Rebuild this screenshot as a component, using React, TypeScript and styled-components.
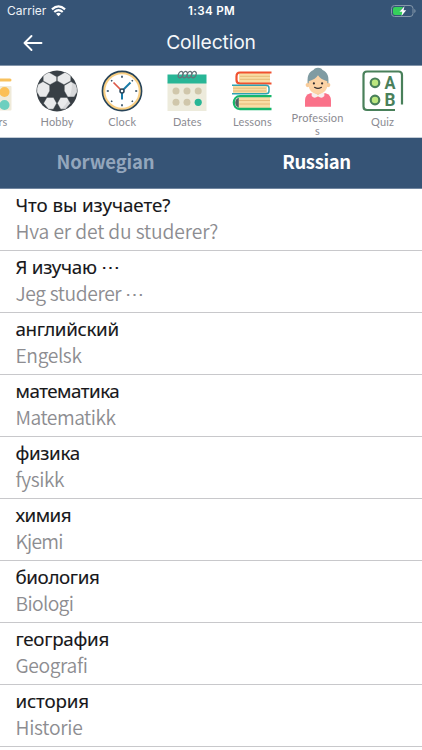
import React from "react";
import styled, { createGlobalStyle } from "styled-components";

const Global = createGlobalStyle`
  * { box-sizing: border-box; }
  body { margin: 0; background: #fff; overflow: hidden; }
`;
const Screen = styled.div`
  width: 422px; height: 750px; overflow: hidden; background: #fff;
  display: flex; flex-direction: column;
  font-family: "Noto Sans CJK SC", "Noto Sans", sans-serif;
`;
const StatusBar = styled.div`
  flex: none; height: 22px; padding: 0 6px 0 7px; background: #365476; color: #fff;
  display: grid; grid-template-columns: 1fr auto 1fr; align-items: center;
  font: 400 12px/22px "Inter", sans-serif;
`;
const Carrier = styled.div`
  display: flex; align-items: center; gap: 5px; letter-spacing: 0; color: #eef2f6;
`;
const Time = styled.div`
  font-weight: 600; font-size: 11.6px; letter-spacing: 0.3px;
`;
const Battery = styled.div`
  display: flex; justify-content: flex-end;
`;
const NavBar = styled.header`
  flex: none; height: 44px; padding: 0 23px; background: #365476; color: #f4f7fa;
  border-bottom: 1px solid #8395aa;
  display: grid; grid-template-columns: 20px 1fr 20px; align-items: center;
`;
const Title = styled.h1`
  margin: 0; padding-bottom: 3px; text-align: center;
  font: 400 19.3px/24px "Inter", sans-serif; letter-spacing: -0.15px;
`;
const BackButton = styled.button`
  border: 0; padding: 0; background: none; display: flex; width: 20px; height: 18px; margin-bottom: 2px;
`;
const Categories = styled.nav`
  flex: none; height: 72px; padding-top: 4px; border-bottom: 1px solid #c3ccd6;
  display: flex; overflow: hidden;
`;
const Category = styled.div<{ $raised?: boolean }>`
  flex: none; width: 65.1px; display: flex; flex-direction: column; align-items: center;
  margin-top: ${(p) => (p.$raised ? "-3px" : "0")};
  &:first-child { margin-left: -40.5px; padding-right: 1px; }
`;
const CategoryLabel = styled.span`
  width: 54px; margin-top: 3px;
  font: 400 11px/13px "Lato", sans-serif; letter-spacing: 0.15px; color: #8b8b92;
  text-align: center; overflow-wrap: anywhere;
`;
const Tabs = styled.div`
  flex: none; height: 51px; background: #365476; border-bottom: 1px solid #7186a0;
  display: grid; grid-template-columns: 1fr 1fr;
`;
const Tab = styled.div<{ $active?: boolean }>`
  text-align: center; font-weight: 700; font-size: 18.5px; line-height: 46px;
  font-family: "Noto Sans CJK SC", sans-serif;
  letter-spacing: ${(p) => (p.$active ? "-0.35px" : "-0.15px")};
  color: ${(p) => (p.$active ? "#fff" : "#93a6bc")};
`;
const List = styled.main`
  flex: 1; min-height: 0; overflow: hidden;
`;
const Row = styled.section`
  height: 62.05px; padding: 2.5px 15.5px 0; border-bottom: 1px solid #c8c8cb;
`;
const Phrase = styled.div<{ $track: number }>`
  height: 26px; line-height: 27px; white-space: nowrap; color: #17171a;
  font-family: "Noto Sans", sans-serif; font-size: 18.8px; font-weight: 400;
  -webkit-text-stroke: 0.12px #17171a;
  letter-spacing: ${(p) => p.$track}px;
`;
const Translation = styled.div<{ $track: number }>`
  height: 27px; line-height: 27px; white-space: nowrap; color: #8d8d91;
  font-family: "Noto Sans CJK SC", sans-serif; font-size: 19.3px; font-weight: 350;
  letter-spacing: ${(p) => p.$track}px;
`;
const Dots = styled.span`
  font-family: "Noto Sans", sans-serif;
`;

const Svg = ({ children }: { children: React.ReactNode }) => (
  <svg width="42" height="42" viewBox="0 0 42 42" fill="none">{children}</svg>
);

const ColorsIcon = () => (
  <Svg>
    <path d="M3 10h36" stroke="#f8c15e" strokeWidth="3" strokeLinecap="round" />
    <rect x="2" y="16" width="38.500" height="24.500" rx="1" fill="#efead9" />
    <circle cx="33.500" cy="22" r="5" fill="#fbbf56" />
    <circle cx="33.500" cy="35" r="5" fill="#6dcfbf" />
  </Svg>
);

const BallIcon = () => (
  <Svg>
    <circle cx="21" cy="21" r="20.4" fill="#383f45" />
    <g fill="#e9eaeb" stroke="#383f45" strokeWidth=".4" strokeLinejoin="round">
      <path d="M13 2.300 20.700 6.700V11L14 14.700 7.200 11V6Q10 3.500 13 2.300Z" />
      <path d="M29 2.300 21.300 6.700V11L28 14.700 34.800 11V6Q32 3.500 29 2.300Z" />
      <path d="M7 11.600 13.700 15.400V21L10.300 26.900H3.800L.8 22Q.6 18 2 14.600Z" />
      <path d="M35 11.600 28.300 15.400V21L31.700 26.900H38.200L41.200 22Q41.400 18 40 14.600Z" />
      <path d="M10.900 27.400H17.500L20.700 33.200 17.300 39.200H12.500L7.500 33.300Z" />
      <path d="M31.100 27.400H24.500L21.300 33.200 24.700 39.200H29.500L34.500 33.300Z" />
    </g>
    <path d="M35.500 8a19.700 19.700 0 0 1-12 32.500C35 32 37 18 35.500 8Z" fill="#383f45" opacity=".1" />
  </Svg>
);

const ClockIcon = () => (
  <Svg>
    <circle cx="21" cy="21" r="19.600" fill="#f9cf83" stroke="#27445a" strokeWidth="1.600" />
    <circle cx="21" cy="21" r="16.700" fill="#fff" />
    <path d="M21 5.800v2M21 34.200v2M5.800 21h2M34.200 21h2M10.200 10.200l1 1M31.800 10.200l-1 1M10.200 31.800l1-1M31.800 31.800l-1-1" stroke="#27445a" strokeWidth="1.600" />
    <path d="m12.500 12.500 7 7" stroke="#dd5948" strokeWidth="1.700" />
    <path d="m22 20 7.500-7.500" stroke="#187ba8" strokeWidth="2" />
    <path d="M21 23v6.500" stroke="#187ba8" strokeWidth="2" />
    <circle cx="21" cy="21" r="2" fill="#fff" stroke="#27445a" strokeWidth="1.500" />
  </Svg>
);

const CalendarIcon = () => (
  <Svg>
    <path d="M1.500 12h39v29h-39z" fill="#edebdc" />
    <path d="M1.500 4.500h39v9h-39z" fill="#28b696" />
    <g fill="#d0c7ab">
      <circle cx="10" cy="21" r="3.500" /><circle cx="21" cy="21" r="3.500" /><circle cx="32.200" cy="21" r="3.500" />
      <circle cx="10" cy="32.300" r="3.500" /><circle cx="21" cy="32.300" r="3.500" />
    </g>
    <circle cx="32.200" cy="32.300" r="3.600" fill="#28b696" />
    <g stroke="#66747a" strokeWidth="1.200">
      <ellipse cx="14.600" cy="4.600" rx="2.200" ry="3.300" transform="rotate(25 14.600 4.600)" />
      <ellipse cx="19" cy="4.600" rx="2.200" ry="3.300" transform="rotate(25 19 4.600)" />
      <ellipse cx="23.400" cy="4.600" rx="2.200" ry="3.300" transform="rotate(25 23.400 4.600)" />
      <ellipse cx="27.800" cy="4.600" rx="2.200" ry="3.300" transform="rotate(25 27.800 4.600)" />
    </g>
  </Svg>
);

const BooksIcon = () => (
  <Svg>
    <path d="M8 3h31v10H8Z" fill="#f8dda5" />
    <path d="M9 6.300h30M9 9.300h30" stroke="#dfb16d" strokeWidth=".8" />
    <path d="M40.500 2.500H9Q5.500 2.500 5.500 6.500v3.500q0 3.500 3.500 3.500h31.500" stroke="#f05230" strokeWidth="2.200" />
    <path d="M2 15.500h34v8H2Z" fill="#f8dda5" />
    <path d="M2 18.200h33M2 21h33" stroke="#dfb16d" strokeWidth=".8" />
    <path d="M1 15.200h34q3 0 3 3v2.800q0 2.800-3 2.800H1" stroke="#2fa2b1" strokeWidth="1.500" />
    <path d="M8 27h31v11H8Z" fill="#f8dda5" />
    <path d="M8 30.500h31M8 34h31" stroke="#dfb16d" strokeWidth=".8" />
    <path d="M40.500 26.200H9C.8 26.200.8 39 9 39h31.500" stroke="#16b66b" strokeWidth="2.300" />
    <path d="M7.800 27.500v10.300Q4.200 36 4.200 32.700 4.200 29 7.800 27.500Z" fill="#53615f" />
  </Svg>
);

const PersonIcon = () => (
  <Svg>
    <path d="M16 4Q17 .8 21 .8T26 4Z" fill="#7f9ba2" />
    <path d="M10.300 19V13C10.300 6 14.500 2.300 21 2.300S31.700 6 31.700 13v6Z" fill="#7f9ba2" />
    <path d="M7.700 40.700V34q0-5.500 5.500-7.200h15.600q5.500 1.700 5.500 7.200v6.700Z" fill="#fa7189" />
    <path d="M17 23h8v6q-4 3.500-8 0Z" fill="#f1c28d" />
    <path d="m14.500 27 2.500-.8 4 2.600 4-2.600 2.500.8v2.800q-3 3.500-6.500 0-3.500 3.500-6.500 0Z" fill="#f8eeee" />
    <circle cx="10.500" cy="18.500" r="2.200" fill="#f9cb99" /><circle cx="31.500" cy="18.500" r="2.200" fill="#f9cb99" />
    <path d="M11.500 14.500C16.500 13.500 19.500 11 21 8.500c1.500 2.500 4.500 5 9.500 6V19c0 5-4 8.500-9.500 8.500s-9.500-3.500-9.500-8.500Z" fill="#fcd3a5" />
    <circle cx="16.800" cy="16.800" r="1.100" fill="#342f32" /><circle cx="25.200" cy="16.800" r="1.100" fill="#342f32" />
    <path d="M17.500 20.800q3.500 2.200 7 0" stroke="#342f32" strokeWidth="1.300" strokeLinecap="round" />
  </Svg>
);

const QuizLetter = styled.text`
  font: 700 18px "Roboto", sans-serif;
  fill: #49805a;
`;

const QuizIcon = () => (
  <Svg>
    <path d="M33 40H5q-3.500 0-3.500-3.500V5q0-3.500 3.500-3.500h31.500Q40 1.500 40 5v29.500" stroke="#49805a" strokeWidth="2.200" />
    <circle cx="13" cy="12.800" r="4.300" fill="#bce77f" stroke="#49805a" strokeWidth="2.200" />
    <circle cx="13" cy="30" r="4.300" fill="#bce77f" stroke="#49805a" strokeWidth="2.200" />
    <QuizLetter x="22.500" y="19" textLength="11" lengthAdjust="spacingAndGlyphs">A</QuizLetter>
    <QuizLetter x="22.500" y="36" textLength="11" lengthAdjust="spacingAndGlyphs">B</QuizLetter>
  </Svg>
);

const categories = [
  { label: "Colors", icon: <ColorsIcon /> },
  { label: "Hobby", icon: <BallIcon /> },
  { label: "Clock", icon: <ClockIcon /> },
  { label: "Dates", icon: <CalendarIcon /> },
  { label: "Lessons", icon: <BooksIcon /> },
  { label: "Professions", icon: <PersonIcon />, raised: true },
  { label: "Quiz", icon: <QuizIcon /> },
];

const phrases: [string, string, number, number][] = [
  ["Что вы изучаете?", "Hva er det du studerer?", -0.07, -0.13],
  ["Я изучаю ⋯", "Jeg studerer ⋯", -0.3, -0.38],
  ["английский", "Engelsk", -0.33, -0.4],
  ["математика", "Matematikk", -0.5, -0.5],
  ["физика", "fysikk", -0.35, -0.4],
  ["химия", "Kjemi", -0.55, -0.7],
  ["биология", "Biologi", -0.38, -0.65],
  ["география", "Geografi", -0.27, -0.38],
  ["история", "Historie", -0.17, -0.27],
];

const withDots = (text: string) =>
  text.endsWith("⋯") ? <>{text.slice(0, -1)}<Dots>⋯</Dots></> : text;

export default function App() {
  return (
    <Screen>
      <Global />
      <StatusBar>
        <Carrier>
          Carrier
          <svg width="15" height="12" viewBox="0 0 16 12" fill="none" stroke="#fff" strokeWidth="2.300">
            <path d="M1 4.300Q8-2 15 4.300M3.500 7Q8 3 12.500 7" />
            <path d="M5.400 8.900Q8 6.900 10.600 8.900L8 11.500Z" fill="#fff" stroke="none" />
          </svg>
        </Carrier>
        <Time>1:34 PM</Time>
        <Battery>
          <svg width="25" height="12" viewBox="0 0 25 12">
            <rect x=".5" y=".5" width="21.500" height="11" rx="3" fill="none" stroke="#8497aa" />
            <path d="M4 2h8l-3 4.500h3L11 10H4q-2 0-2-2V4q0-2 2-2Z" fill="#35cf5b" />
            <path d="m13.500 1.200-5 5.500h2.800l-.8 4.200 4.700-5.600h-2.700Z" fill="#fff" />
            <path d="M23.300 4v4q1.300-.5 1.300-2t-1.300-2Z" fill="#8497aa" />
          </svg>
        </Battery>
      </StatusBar>
      <NavBar>
        <BackButton aria-label="Back">
          <svg width="20" height="18" viewBox="0 0 20 18" fill="none" stroke="#fff" strokeWidth="1.900" strokeLinecap="round" strokeLinejoin="round">
            <path d="M18.500 9H1.500M8.500 2l-7 7 7 7" />
          </svg>
        </BackButton>
        <Title>Collection</Title>
      </NavBar>
      <Categories>
        {categories.map((c) => (
          <Category key={c.label} $raised={c.raised}>
            {c.icon}
            <CategoryLabel>{c.label}</CategoryLabel>
          </Category>
        ))}
      </Categories>
      <Tabs>
        <Tab>Norwegian</Tab>
        <Tab $active>Russian</Tab>
      </Tabs>
      <List>
        {phrases.map(([phrase, translation, a, b]) => (
          <Row key={phrase}>
            <Phrase $track={a}>{withDots(phrase)}</Phrase>
            <Translation $track={b}>{withDots(translation)}</Translation>
          </Row>
        ))}
      </List>
    </Screen>
  );
}
